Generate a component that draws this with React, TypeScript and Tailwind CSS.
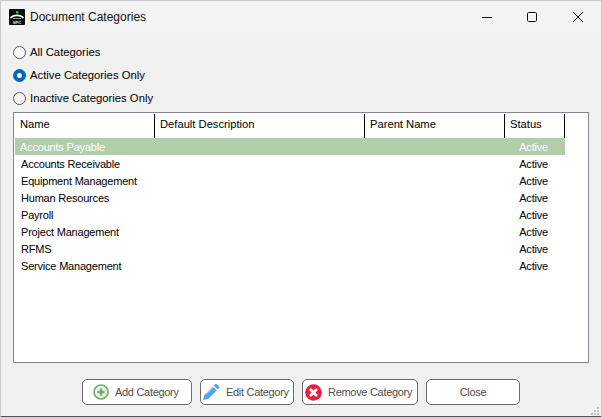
const font = "font-['Liberation_Sans',Arial,sans-serif]";

const rows = [
  "Accounts Payable",
  "Accounts Receivable",
  "Equipment Management",
  "Human Resources",
  "Payroll",
  "Project Management",
  "RFMS",
  "Service Management",
];

const radios = [
  { label: "All Categories", checked: false },
  { label: "Active Categories Only", checked: true },
  { label: "Inactive Categories Only", checked: false },
];

const columns = [
  { label: "Name", width: "w-[140px]" },
  { label: "Default Description", width: "w-[210px]" },
  { label: "Parent Name", width: "w-[140px]" },
  { label: "Status", width: "w-[60px]" },
];

export default function App() {
  return (
    <div className={`relative flex h-[417px] w-[602px] flex-col overflow-hidden border-x border-t border-[#c8c8c8] bg-[#f0f0f0] text-[11px] text-black ${font}`}>
      <div className="flex h-[31px] shrink-0 items-center bg-[#f3f3f3]">
        <AppLogo />
        <span className="ml-[5px] text-[12px] text-[#111]">Document Categories</span>
        <div className="ml-auto flex items-center">
          <WindowButtons />
        </div>
      </div>

      <div className="flex flex-col gap-[6px] pl-[12px] pt-[12px]">
        {radios.map((radio) => (
          <div key={radio.label} className="flex h-[17px] items-center gap-[4px]">
            <Radio checked={radio.checked} />
            <span className="text-[11.3px]">{radio.label}</span>
          </div>
        ))}
      </div>

      <div className="ml-[12px] mt-[5px] h-[251px] w-[576px] shrink-0 border border-[#828790] bg-white pl-px pt-px">
        <div className="flex h-[24px] text-[11.2px]">
          {columns.map((col) => (
            <div key={col.label} className={`${col.width} flex items-center border-r border-black pb-[3px] pl-[5px]`}>
              {col.label}
            </div>
          ))}
        </div>
        {rows.map((row, i) => (
          <div
            key={row}
            className={`flex h-[17px] w-[550px] items-center pt-px tracking-[-0.2px] ${i === 0 ? "bg-[#b1cdac] pl-[5px] text-white" : "pl-[6px]"}`}
          >
            <span>{row}</span>
            <span className="ml-auto pr-[17px]">Active</span>
          </div>
        ))}
      </div>

      <div className="ml-[81px] mt-[16px] flex gap-[8px]">
        <ActionButton width="w-[110px] pl-[10px] gap-[6px]" icon={<AddIcon />} label="Add Category" />
        <ActionButton width="w-[94px] pl-[1px] gap-[6px]" icon={<EditIcon />} label="Edit Category" />
        <ActionButton width="w-[116px] pl-[2px] gap-[6px]" icon={<RemoveIcon />} label="Remove Category" />
        <ActionButton width="w-[94px] justify-center" label="Close" />
      </div>

      <ResizeGrip />
      <div className="absolute bottom-0 left-0 h-px w-full bg-[#3f5363]" />
    </div>
  );
}

function ActionButton({ width, icon, label }: { width: string; icon?: React.ReactNode; label: string }) {
  return (
    <button
      type="button"
      className={`${width} flex h-[26px] items-center whitespace-nowrap rounded-[5px] border border-[#6b6b6b] bg-white text-[11px] tracking-[-0.3px] text-[#4d4d4d]`}
    >
      {icon}
      <span>{label}</span>
    </button>
  );
}

function Radio({ checked }: { checked: boolean }) {
  if (checked) {
    return (
      <span className="flex h-[13px] w-[13px] items-center justify-center rounded-full bg-[#0067c0]">
        <span className="h-[5px] w-[5px] rounded-full bg-white" />
      </span>
    );
  }
  return <span className="h-[13px] w-[13px] rounded-full border border-[#5a5a5a] bg-[#f6f6f6]" />;
}

function AppLogo() {
  return (
    <svg className="ml-[8px] h-[16px] w-[16px]" viewBox="0 0 16 16">
      <rect width="16" height="16" rx="1" fill="#0c0c0c" />
      <rect x="7" y="2" width="2.4" height="2.4" fill="#35c24a" />
      <path d="M1.5 9C4.5 5.5 11.5 5.5 14.5 9" fill="none" stroke="#fff" strokeWidth="1.6" />
      <rect x="4" y="9" width="8" height="1" fill="#9a9a9a" />
      <text x="8" y="14.5" textAnchor="middle" fontSize="4.2" fontWeight="700" fill="#e8e8e8" fontFamily="Liberation Sans">
        SPC
      </text>
    </svg>
  );
}

function WindowButtons() {
  return (
    <>
      <svg className="mr-[33px] h-[12px] w-[12px]" viewBox="0 0 12 12" fill="none" stroke="#111">
        <path d="M1 6.5h10" />
      </svg>
      <svg className="mr-[34px] h-[12px] w-[12px]" viewBox="0 0 12 12" fill="none" stroke="#111">
        <rect x="1.5" y="1.5" width="9" height="9" rx="1.2" />
      </svg>
      <svg className="mr-[17px] h-[12px] w-[12px]" viewBox="0 0 12 12" fill="none" stroke="#111">
        <path d="M1 1l10 10M11 1L1 11" />
      </svg>
    </>
  );
}

function ResizeGrip() {
  return (
    <svg className="absolute bottom-[2px] right-[2px] h-[8px] w-[8px]" viewBox="0 0 8 8" fill="#c4c4c4">
      <rect x="6" y="0" width="2" height="2" />
      <rect x="3" y="3" width="2" height="2" />
      <rect x="6" y="3" width="2" height="2" />
      <rect x="0" y="6" width="2" height="2" />
      <rect x="3" y="6" width="2" height="2" />
      <rect x="6" y="6" width="2" height="2" />
    </svg>
  );
}

function AddIcon() {
  return (
    <svg className="h-[16px] w-[16px] shrink-0" viewBox="0 0 16 16">
      <circle cx="8" cy="8" r="7" fill="#eef5ec" stroke="#74ad6e" strokeWidth="1.7" />
      <path d="M8 4.2v7.6M4.2 8h7.6" stroke="#74ad6e" strokeWidth="2.4" />
    </svg>
  );
}

function EditIcon() {
  return (
    <svg className="h-[18px] w-[18px] shrink-0" viewBox="0 0 18 18">
      <path d="M1 17l1.3-5L10.8 3.5l4 4L6 16z" fill="#4da6ea" />
      <path d="M11.8 2.5l1.3-1.3a1.2 1.2 0 0 1 1.7 0l2.2 2.2a1.2 1.2 0 0 1 0 1.7l-1.3 1.3z" fill="#4da6ea" />
      <path d="M3.8 11.5l7.8-7.8" stroke="#c4e3f8" strokeWidth="1" />
    </svg>
  );
}

function RemoveIcon() {
  return (
    <svg className="h-[17px] w-[17px] shrink-0" viewBox="0 0 17 17">
      <circle cx="8.5" cy="8.5" r="8.3" fill="#ee1c3c" />
      <path d="M5.8 5.8l5.4 5.4M11.2 5.8l-5.4 5.4" stroke="#fff" strokeWidth="2.8" strokeLinecap="round" />
    </svg>
  );
}
